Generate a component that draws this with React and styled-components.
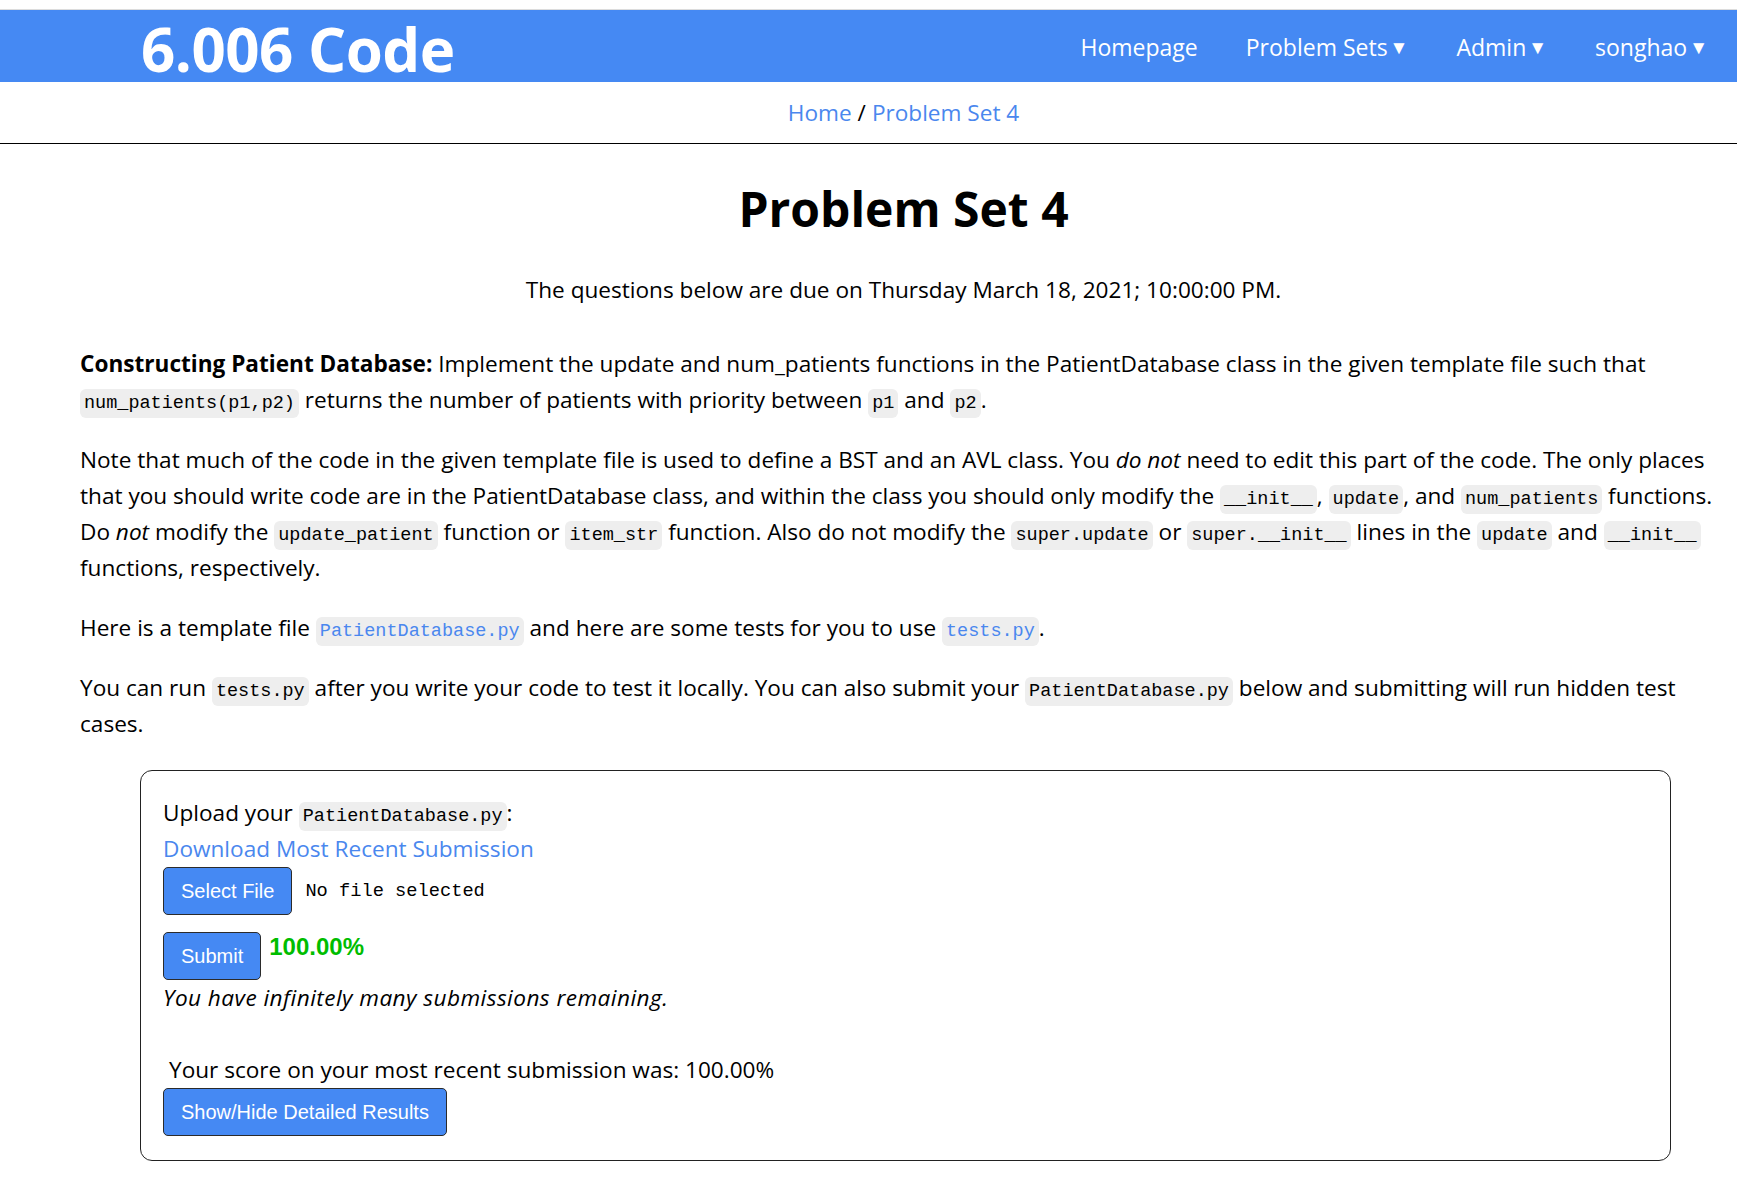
import React from 'react'
import styled, { createGlobalStyle } from "styled-components";

const GlobalStyle = createGlobalStyle`
  body {
    margin: 0;
    background: #fff;
    color: #000;
    font-family: "Open Sans", "Noto Sans", sans-serif;
  }
`;

const Page = styled.div`
  padding-top: 9px;
`;

const Header = styled.header`
  border-top: 1px solid #dcdcdc;
  background-color: #4589f3;
  height: 72px;
  display: flex;
  align-items: center;
  justify-content: space-between;
  padding: 0 29px 0 141px;
`;

const Logo = styled.a`
  color: white;
  font-size: 60px;
  font-weight: 700;
  letter-spacing: -0.5px;
  text-decoration: none;
  line-height: 1;
  position: relative;
  top: 3px;
`;

const Nav = styled.nav`
  display: flex;
  align-items: center;
  gap: 48px;
  position: relative;
  top: 1px;
`;

const NavItem = styled.a`
  color: white;
  font-size: 23px;
  text-decoration: none;
  display: flex;
  align-items: center;
  gap: 2px;
`;

const Caret = styled.span`
  font-size: 19px;
  line-height: 1;
`;

const Crumbs = styled.div`
  height: 61px;
  border-bottom: 1px solid #000;
  display: flex;
  align-items: center;
  justify-content: center;
  padding: 0 10px 0 80px;
  font-size: 22.6px;
`;

const CrumbLink = styled.a`
  color: #4a87ee;
  text-decoration: none;
`;

const Sep = styled.span`
  margin: 0 6px;
`;

const Content = styled.main`
  padding: 0 10px 40px 80px;
`;

const Title = styled.h1`
  text-align: center;
  font-size: 48px;
  font-weight: 700;
  margin: 34px 0 0;
  line-height: 62px;
`;

const Due = styled.p`
  text-align: center;
  font-size: 22.6px;
  line-height: 36px;
  margin: 32px 0 38px;
`;

const Para = styled.p`
  font-size: 22.6px;
  line-height: 36px;
  margin: 0 0 24px;
`;

const Code = styled.code`
  font-family: "Liberation Mono", "DejaVu Sans Mono", monospace;
  font-size: 18.5px;
  line-height: 1;
  background: #eeeeee;
  border-radius: 6px;
  padding: 4px 4px;
  color: ${p => (p.$link ? "#4a87ee" : "#000")};
`;

const Box = styled.section`
  margin: 28px 56px 0 60px;
  border: 1px solid #222;
  border-radius: 12px;
  padding: 24px 22px 24px;
  font-size: 22.6px;
  line-height: 36px;
`;

const Line = styled.div`
  line-height: 36px;
`;

const DownloadLink = styled.a`
  color: #4a87ee;
  text-decoration: none;
  display: block;
`;

const Row = styled.div`
  display: flex;
  align-items: ${p => p.$top ? "flex-start" : "center"};
  gap: ${p => p.$gap || 12}px;
  margin-top: ${p => p.$mt || 0}px;
`;

const Button = styled.button`
  font-family: "Liberation Sans", Arial, sans-serif;
  font-size: 20px;
  color: white;
  background: #4589f3;
  border: 1px solid #2b2b2b;
  border-radius: 5px;
  height: 48px;
  padding: 0 17px;
  cursor: pointer;
`;

const NoFile = styled.span`
  font-family: "Liberation Mono", "DejaVu Sans Mono", monospace;
  font-size: 18.7px;
`;

const Score = styled.span`
  font-family: "Liberation Sans", Arial, sans-serif;
  font-weight: 700;
  font-size: 24px;
  color: #00bd00;
  margin-top: 3px;
  line-height: 1;
`;

const Remaining = styled.div`
  font-style: italic;
  letter-spacing: 0.45px;
  margin-bottom: 36px;
`;

const Recent = styled.div`
  padding-left: 6px;
`;

export default function App() {
  return (
    <Page>
      <GlobalStyle />
      <Header>
        <Logo href="#">6.006 Code</Logo>
        <Nav>
          <NavItem href="#">Homepage</NavItem>
          <NavItem href="#">Problem Sets <Caret>▼</Caret></NavItem>
          <NavItem href="#">Admin <Caret>▼</Caret></NavItem>
          <NavItem href="#">songhao <Caret>▼</Caret></NavItem>
        </Nav>
      </Header>
      <Crumbs>
        <CrumbLink href="#">Home</CrumbLink>
        <Sep>/</Sep>
        <CrumbLink href="#">Problem Set 4</CrumbLink>
      </Crumbs>
      <Content>
        <Title>Problem Set 4</Title>
        <Due>The questions below are due on Thursday March 18, 2021; 10:00:00 PM.</Due>
        <Para>
          <b>Constructing Patient Database:</b> Implement the update and num_patients functions in the PatientDatabase class in the given template file such that <Code>num_patients(p1,p2)</Code> returns the number of patients with priority between <Code>p1</Code> and <Code>p2</Code>.
        </Para>
        <Para>
          Note that much of the code in the given template file is used to define a BST and an AVL class. You <i>do not</i> need to edit this part of the code. The only places that you should write code are in the PatientDatabase class, and within the class you should only modify the <Code>__init__</Code>, <Code>update</Code>, and <Code>num_patients</Code> functions. Do <i>not</i> modify the <Code>update_patient</Code> function or <Code>item_str</Code> function. Also do not modify the <Code>super.update</Code> or <Code>super.__init__</Code> lines in the <Code>update</Code> and <Code>__init__</Code> functions, respectively.
        </Para>
        <Para>
          Here is a template file <Code $link>PatientDatabase.py</Code> and here are some tests for you to use <Code $link>tests.py</Code>.
        </Para>
        <Para>
          You can run <Code>tests.py</Code> after you write your code to test it locally. You can also submit your <Code>PatientDatabase.py</Code> below and submitting will run hidden test cases.
        </Para>
        <Box>
          <Line>Upload your <Code>PatientDatabase.py</Code>:</Line>
          <DownloadLink href="#">Download Most Recent Submission</DownloadLink>
          <Row $gap={13}>
            <Button>Select File</Button>
            <NoFile>No file selected</NoFile>
          </Row>
          <Row $top $mt={17} $gap={8}>
            <Button>Submit</Button>
            <Score>100.00%</Score>
          </Row>
          <Remaining>You have infinitely many submissions remaining.</Remaining>
          <Recent>Your score on your most recent submission was: 100.00%</Recent>
          <Button>Show/Hide Detailed Results</Button>
        </Box>
      </Content>
    </Page>
  )
}
